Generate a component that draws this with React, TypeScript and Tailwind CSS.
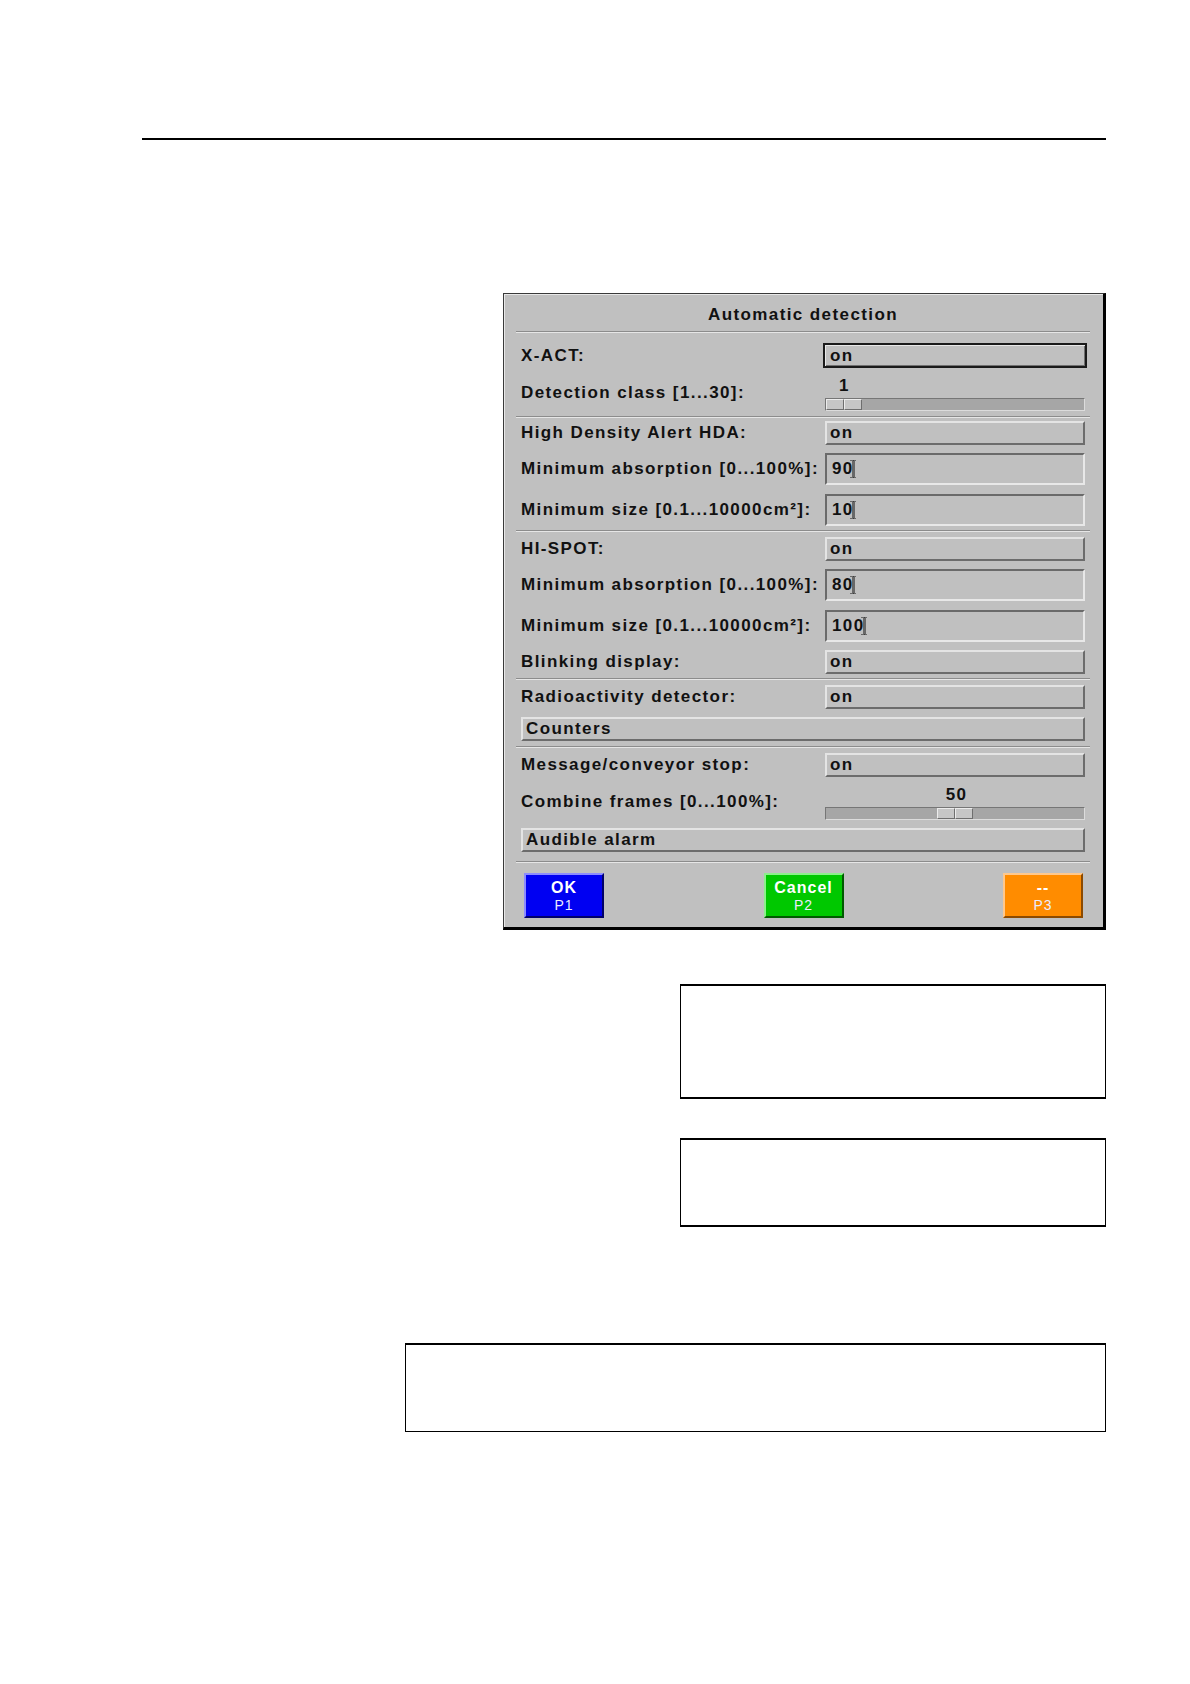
import React from 'react';

const font = { fontFamily: '"Liberation Sans", Arial, sans-serif' };

function Separator({ className = '' }: { className?: string }) {
  return (
    <div className={`flex flex-col ${className}`}>
      <div className="h-px bg-[#8c8c8c]" />
      <div className="h-px bg-[#e6e6e6]" />
    </div>
  );
}

function Cursor() {
  return (
    <svg width="7" height="20" viewBox="0 0 7 20" className="-ml-[4px]">
      <g stroke="#111" strokeWidth="1" strokeDasharray="1 1" fill="none">
        <path d="M0.5 1.5h6" />
        <path d="M3.5 1.5v17" />
        <path d="M0.5 18.5h6" />
        <path d="M2.5 2.5v15" />
        <path d="M4.5 2.5v15" />
      </g>
    </svg>
  );
}

function Label({ children, className = '' }: { children: React.ReactNode; className?: string }) {
  return <div className={`w-[309px] shrink-0 pl-[5px] whitespace-nowrap ${className}`}>{children}</div>;
}

function ToggleRow({ label, value, focused = false, className = '' }: { label: string; value: string; focused?: boolean; className?: string }) {
  return (
    <div className={`flex items-center h-[24px] ${className}`}>
      <Label>{label}</Label>
      <div
        className={`flex-1 h-full flex items-center ${
          focused
            ? '-ml-[2px] -mr-[2px] pl-[5px] border-2 border-[#1a1a1a] shadow-[inset_1px_1px_0_#e8e8e8,inset_-1px_-1px_0_#707070]'
            : 'mr-[5px] pl-[3px] border-2 border-t-[#e4e4e4] border-l-[#e4e4e4] border-r-[#6c6c6c] border-b-[#6c6c6c]'
        }`}
      >
        {value}
      </div>
      {focused && <div className="w-[5px]" />}
    </div>
  );
}

function InputRow({ label, value, className = '' }: { label: string; value: string; className?: string }) {
  return (
    <div className={`flex items-center h-[32px] ${className}`}>
      <Label>{label}</Label>
      <div className="flex-1 mr-[5px] h-full flex items-center pl-[5px] border-2 border-t-[#6a6a6a] border-l-[#6a6a6a] border-r-[#e8e8e8] border-b-[#e8e8e8]">
        <span>{value}</span>
        <Cursor />
      </div>
    </div>
  );
}

function SliderRow({ label, value, pct, className = '', labelClass = '' }: { label: string; value: string; pct: number; className?: string; labelClass?: string }) {
  const left = `calc((100% - 36px) * ${pct / 100})`;
  return (
    <div className={`flex items-center ${className}`}>
      <Label className={labelClass}>{label}</Label>
      <div className="flex-1 mr-[5px] flex flex-col pt-[8px]">
        <div className="relative h-[16px]">
          <div className="absolute top-0 w-[36px] text-center leading-[16px] pl-[3px]" style={{ left }}>
            {value}
          </div>
        </div>
        <div className="relative mt-[4px] h-[13px] bg-[#a6a6a6] border border-t-[#767676] border-l-[#767676] border-r-[#dcdcdc] border-b-[#dcdcdc]">
          <div className="absolute top-0 h-[11px] w-[36px] flex" style={{ left }}>
            <div className="flex-1 bg-[#c6c6c6] border border-t-[#ececec] border-l-[#ececec] border-r-[#6e6e6e] border-b-[#6e6e6e]" />
            <div className="flex-1 bg-[#c6c6c6] border border-t-[#ececec] border-l-[#ececec] border-r-[#6e6e6e] border-b-[#6e6e6e]" />
          </div>
        </div>
      </div>
    </div>
  );
}

function WideButton({ label, className = '' }: { label: string; className?: string }) {
  return (
    <div className={`mx-[5px] h-[24px] flex items-center pl-[3px] border-2 border-t-[#e4e4e4] border-l-[#e4e4e4] border-r-[#6c6c6c] border-b-[#6c6c6c] ${className}`}>
      {label}
    </div>
  );
}

function KeyButton({ title, sub, tone }: { title: string; sub: string; tone: 'blue' | 'green' | 'orange' }) {
  const cls =
    tone === 'blue'
      ? 'bg-[#0000f2] border-t-[#8c8cff] border-l-[#8c8cff] border-r-[#00006a] border-b-[#00006a]'
      : tone === 'green'
      ? 'bg-[#00c800] border-t-[#8cf08c] border-l-[#8cf08c] border-r-[#005a00] border-b-[#005a00]'
      : 'bg-[#ff8c00] border-t-[#ffc88c] border-l-[#ffc88c] border-r-[#8c4a00] border-b-[#8c4a00]';
  return (
    <div className={`w-[80px] h-[45px] border-2 flex flex-col items-center justify-center text-white ${cls}`}>
      <div className="font-bold text-[16px] leading-[18px] tracking-[1px]">{title}</div>
      <div className="font-normal text-[14px] leading-[16px] tracking-[1px] text-[#ececff]">{sub}</div>
    </div>
  );
}

export default function App() {
  return (
    <div className="w-[1190px] h-[1684px] bg-white pt-[138px]" style={font}>
      <div className="ml-[142px] w-[964px] h-[2px] bg-black" />

      <div className="mt-[153px] ml-[503px] w-[603px] bg-[#c0c0c0] border border-[#3a3a3a] border-r-[3px] border-b-[3px] border-r-black border-b-black text-[17px] font-bold tracking-[1.4px] text-[#111]">
        <div className="pl-[12px] pr-[13px] pb-[9px] shadow-[inset_1px_1px_0_#e8e8e8]">
          <div className="h-[37px] pt-[4px] flex items-center justify-center">Automatic detection</div>
          <Separator />

          <ToggleRow label="X-ACT:" value="on" focused className="mt-[10px] h-[25px]" />
          <SliderRow label="Detection class [1...30]:" value="1" pct={0} className="h-[45px]" labelClass="pt-[4px]" />
          <Separator className="mt-[3px]" />

          <ToggleRow label="High Density Alert HDA:" value="on" className="mt-[3px]" />
          <InputRow label="Minimum absorption [0...100%]:" value="90" className="mt-[8px]" />
          <InputRow label="Minimum size [0.1...10000cm²]:" value="10" className="mt-[9px]" />
          <Separator className="mt-[4px]" />

          <ToggleRow label="HI-SPOT:" value="on" className="mt-[5px]" />
          <InputRow label="Minimum absorption [0...100%]:" value="80" className="mt-[8px]" />
          <InputRow label="Minimum size [0.1...10000cm²]:" value="100" className="mt-[9px]" />
          <ToggleRow label="Blinking display:" value="on" className="mt-[8px]" />
          <Separator className="mt-[4px]" />

          <ToggleRow label="Radioactivity detector:" value="on" className="mt-[5px]" />
          <WideButton label="Counters" className="mt-[8px]" />
          <Separator className="mt-[5px]" />

          <ToggleRow label="Message/conveyor stop:" value="on" className="mt-[5px]" />
          <SliderRow label="Combine frames [0...100%]:" value="50" pct={50} className="h-[42px] pt-[2px]" labelClass="pt-[6px]" />
          <WideButton label="Audible alarm" className="mt-[9px]" />
          <Separator className="mt-[9px]" />

          <div className="mt-[10px] ml-[8px] mr-[7px] flex justify-between">
            <KeyButton title="OK" sub="P1" tone="blue" />
            <KeyButton title="Cancel" sub="P2" tone="green" />
            <KeyButton title="--" sub="P3" tone="orange" />
          </div>
        </div>
      </div>

      <div className="mt-[54px] ml-[680px] w-[426px] h-[115px] border border-black border-t-2 border-b-2" />
      <div className="mt-[39px] ml-[680px] w-[426px] h-[89px] border border-black border-t-2 border-b-2" />
      <div className="mt-[116px] ml-[405px] w-[701px] h-[89px] border border-black border-t-2" />
    </div>
  );
}
